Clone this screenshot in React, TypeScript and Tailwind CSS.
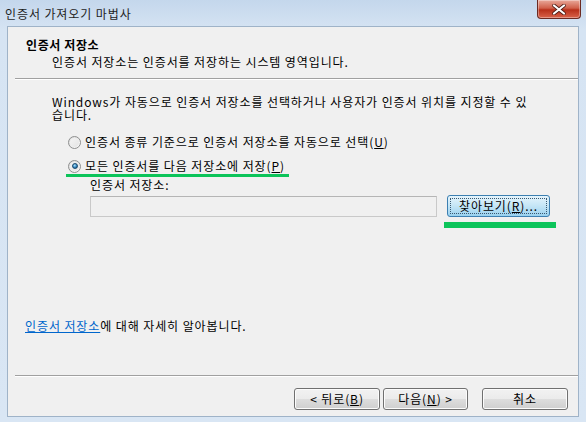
import React from "react";

const font = { fontFamily: '"Noto Sans CJK KR", "Noto Sans", sans-serif' };

function Radio({ checked }: { checked?: boolean }) {
  return (
    <span className="relative inline-flex h-[13px] w-[13px] shrink-0 items-center justify-center rounded-full border border-[#8e8f8f] bg-gradient-to-br from-[#dcdcdc] to-[#fbfbfb]">
      <span className="h-[9px] w-[9px] rounded-full bg-gradient-to-br from-[#f4f4f4] to-[#e4e4e4]" />
      {checked && (
        <span className="absolute h-[6px] w-[6px] rounded-full border border-[#1a4a6e] bg-[radial-gradient(circle_at_40%_35%,#a9e1ff,#2c7fb8_60%,#0e3f69)]" />
      )}
    </span>
  );
}

function Btn({ children, focused, className = "" }: { children: React.ReactNode; focused?: boolean; className?: string }) {
  if (focused) {
    return (
      <div className={"flex items-center justify-center rounded-[3px] border border-[#3c7fb1] bg-gradient-to-b from-[#e5f4fc] via-[#c4e5f6] to-[#98d1ef] p-[2px] " + className}>
        <div className="flex h-full w-full items-center justify-center border border-dotted border-[#3a5870] text-[12px] leading-[14px] text-black">
          {children}
        </div>
      </div>
    );
  }
  return (
    <div className={"flex items-center justify-center rounded-[3px] border border-[#707070] bg-[linear-gradient(#f2f2f2_0%,#ebebeb_50%,#dddddd_51%,#cfcfcf_100%)] text-[12px] leading-[14px] text-black shadow-[inset_0_0_0_1px_#fcfcfc] " + className}>
      {children}
    </div>
  );
}

export default function App() {
  return (
    <div style={font} className="flex h-[422px] w-[586px] flex-col overflow-hidden bg-[linear-gradient(#c4d7ec,#d6e4f3_30px,#d9e6f4)] text-[12px] tracking-[0.9px] text-black">
      {/* Title bar */}
      <div className="relative flex h-[26px] items-center pl-[5px] pt-[1px]">
        <span className="leading-[14px] text-[#1e1e1e]">인증서 가져오기 마법사</span>
        <div className="absolute right-[5px] top-0 flex h-[19px] w-[44px] items-center justify-center rounded-b-[4px] border border-t-0 border-[#6b2a22] bg-[linear-gradient(#e9a99a,#d0604a_45%,#b8301a_55%,#d9634a)] shadow-[inset_0_0_0_1px_rgba(255,255,255,0.35)]">
          <svg width="14" height="11" viewBox="0 0 14 11">
            <path d="M2 1.5 L12 9.5 M12 1.5 L2 9.5" stroke="#4a1a12" strokeWidth="3.6" strokeLinecap="round" />
            <path d="M2 1.5 L12 9.5 M12 1.5 L2 9.5" stroke="#ffffff" strokeWidth="2.2" strokeLinecap="round" />
          </svg>
        </div>
      </div>

      {/* Body */}
      <div className="mx-[7px] mb-[5px] flex flex-1 flex-col border border-[#9fb3c8] bg-[#f0f0f0]">
        {/* Header */}
        <div className="pt-[11px]">
          <div className="pl-[18px] font-bold leading-[14px] tracking-[0.6px]">인증서 저장소</div>
          <div className="mt-[3px] pl-[44px] leading-[14px]">인증서 저장소는 인증서를 저장하는 시스템 영역입니다.</div>
        </div>
        <div className="ml-[7px] mt-[9px] border-t border-b border-t-[#a0a0a0] border-b-white" />

        {/* Main */}
        <div className="relative pl-[44px] pt-[15px]">
          <div className="h-[13px] leading-[13px]">Windows가 자동으로 인증서 저장소를 선택하거나 사용자가 인증서 위치를 지정할 수 있</div>
          <div className="h-[13px] leading-[13px]">습니다.</div>

          <div className="mt-[13px] flex h-[16px] items-center pl-[16px]">
            <Radio />
            <span className="ml-[4px] leading-[14px]">
              인증서 종류 기준으로 인증서 저장소를 자동으로 선택(<span className="underline">U</span>)
            </span>
          </div>
          <div className="relative mt-[8px] flex h-[16px] items-center pl-[16px]">
            <Radio checked />
            <span className="ml-[4px] leading-[14px]">
              모든 인증서를 다음 저장소에 저장(<span className="underline">P</span>)
            </span>
            <div className="absolute left-[14px] top-[16px] h-[3px] w-[223px] bg-[#0cc45a]" />
          </div>

          <div className="mt-[4px] pl-[38px] leading-[14px]">인증서 저장소:</div>
          <div className="relative mt-[3px] flex items-center pl-[38px]">
            <div className="h-[21px] w-[347px] border border-[#c9c9c9] border-t-[#b5b5b5] bg-[#f0f0f0]" />
            <Btn focused className="ml-[10px] h-[22px] w-[103px]">
              찾아보기(<span className="underline">R</span>)...
            </Btn>
            <div className="absolute left-[392px] top-[27px] h-[6px] w-[112px] bg-[#0cc45a]" />
          </div>
        </div>

        <div className="ml-[17px] mt-[102px] leading-[14px]">
          <span className="text-[#0066cc] underline">인증서 저장소</span>에 대해 자세히 알아봅니다.
        </div>

        <div className="flex-1" />

        {/* Footer */}
        <div className="ml-[7px] border-t border-b border-t-[#a0a0a0] border-b-white" />
        <div className="flex justify-end pb-[6px] pr-[10px] pt-[11px]">
          <Btn className="h-[22px] w-[86px]">
            &lt; 뒤로(<span className="underline">B</span>)
          </Btn>
          <Btn className="ml-[3px] h-[22px] w-[85px]">
            다음(<span className="underline">N</span>) &gt;
          </Btn>
          <Btn className="ml-[14px] h-[22px] w-[86px]">취소</Btn>
        </div>
      </div>
    </div>
  );
}
